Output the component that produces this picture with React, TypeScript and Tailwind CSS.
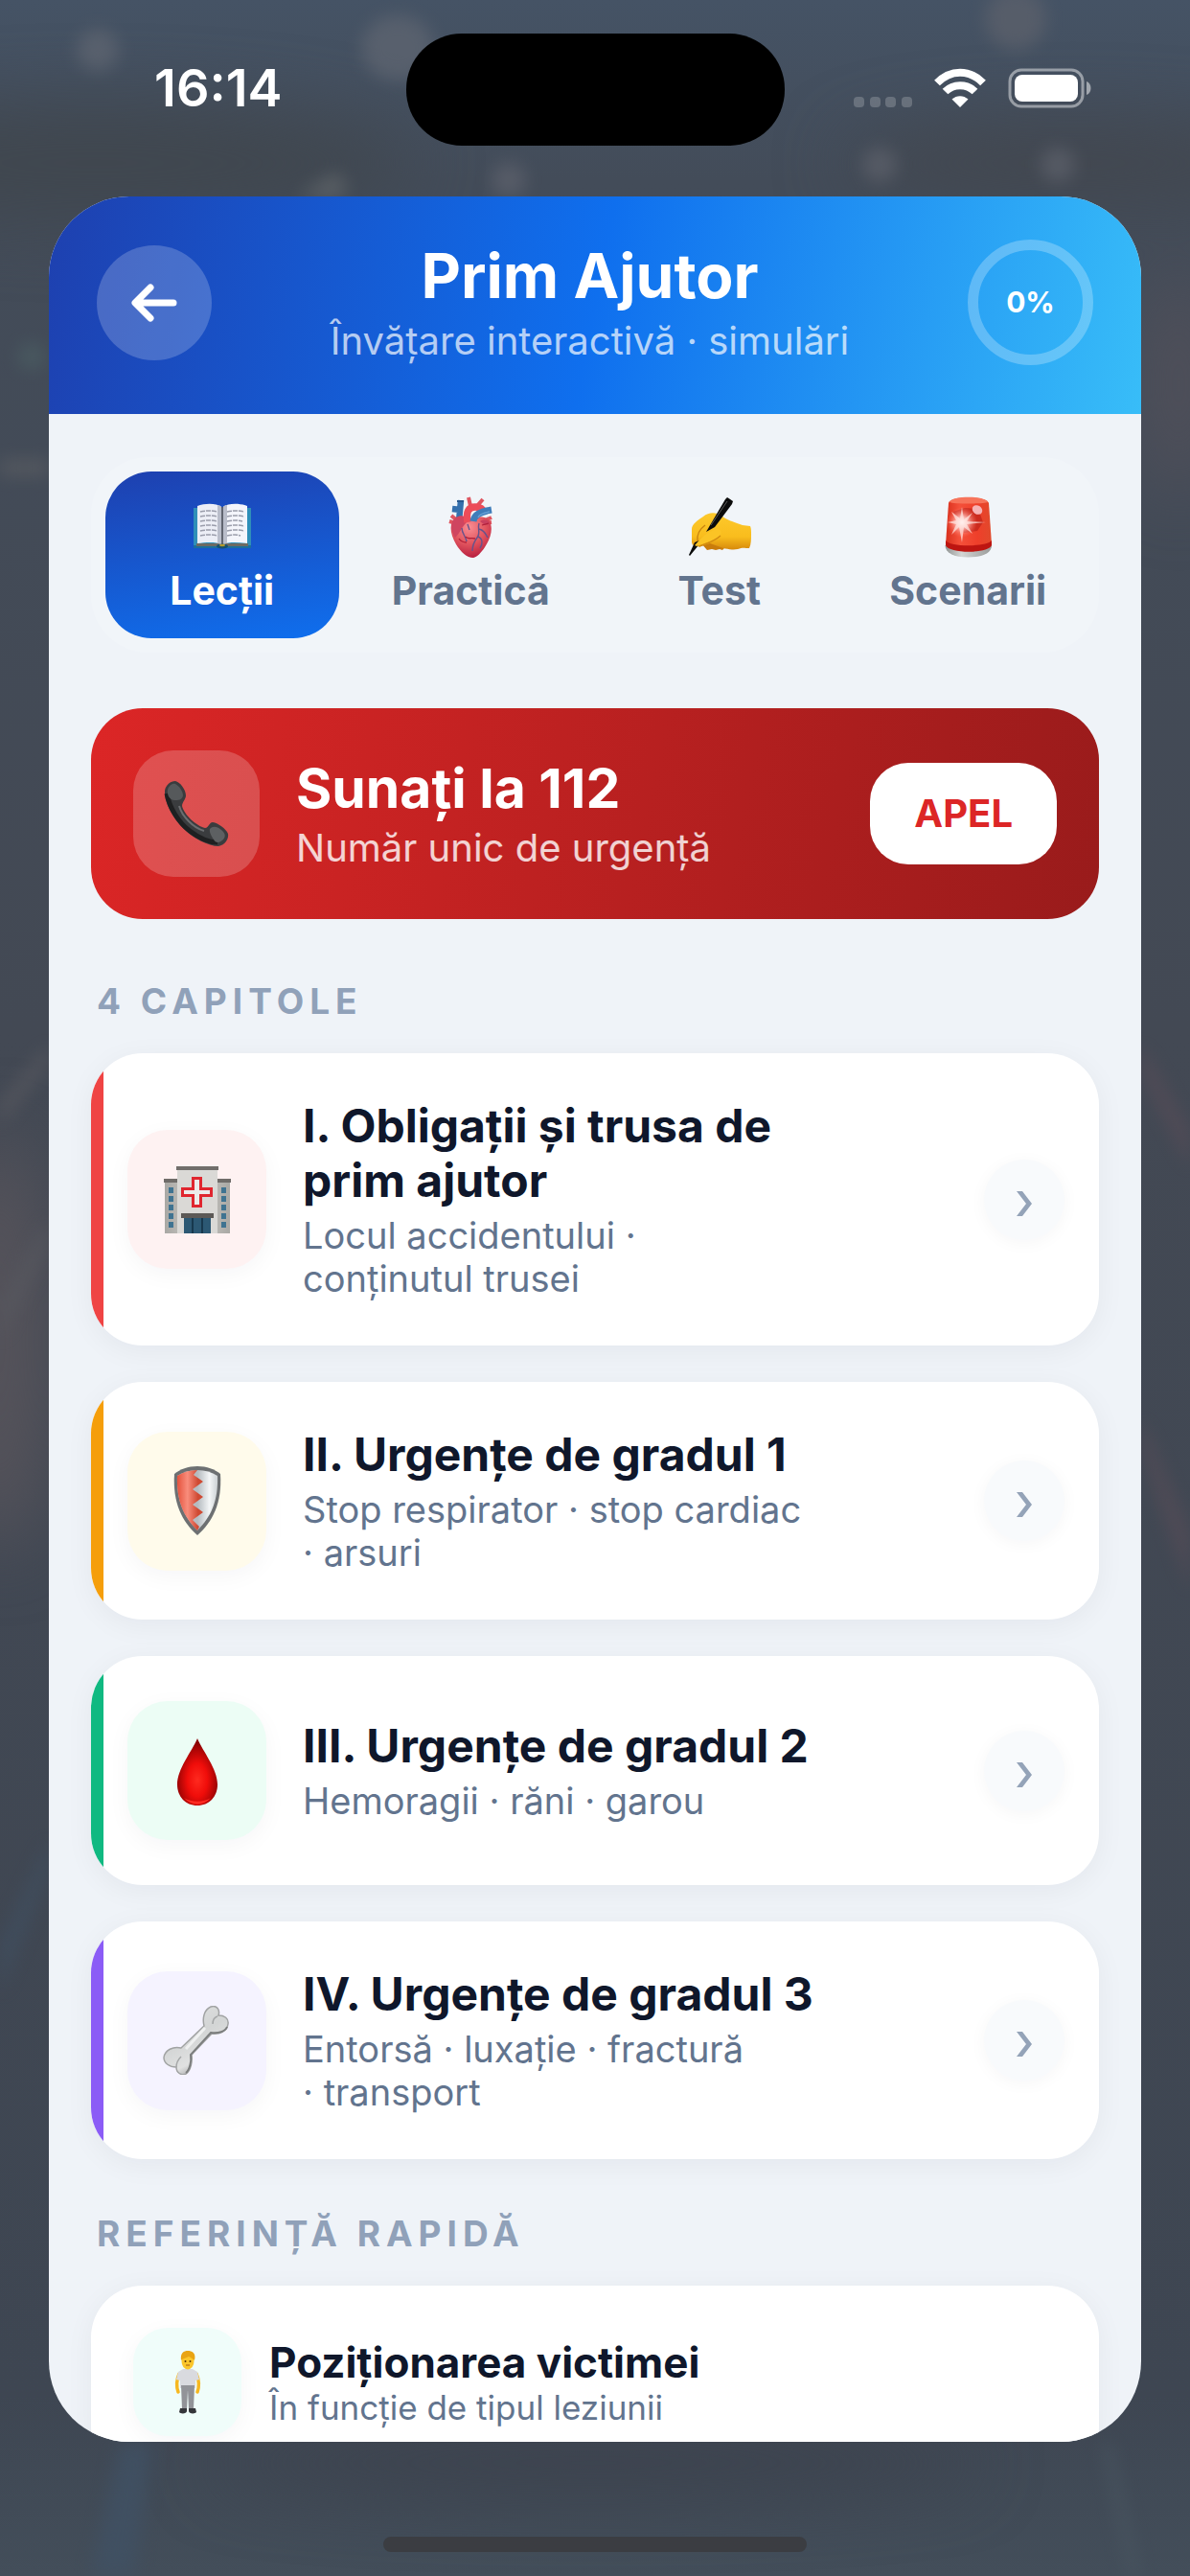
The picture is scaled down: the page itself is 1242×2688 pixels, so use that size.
import { useState, type ReactNode } from "react";
import clsx from "clsx";

type Chapter = {
  title: string;
  subtitle: string;
  stripe: string;
  tile: string;
  icon: ReactNode;
};

function BookIcon() {
  return (
    <svg viewBox="0 0 66 66" className="size-[66px]" aria-hidden="true">
      <path d="M3 13h60v42H3z" fill="#2f8fb8" />
      <path d="M3 52h60v3H3z" fill="#1c6f9c" />
      <path d="M6 50h26v3H6zM34 50h26v3H34z" fill="#6d6a62" />
      <path d="M7 11c8-3 20-3 25 1v39c-6-3-17-2-25-1z" fill="#eceef6" />
      <path d="M59 11c-8-3-20-3-25 1v39c6-3 17-2 25-1z" fill="#f4f5fb" />
      <path d="M28 10c2 0 4 1 5 3 1-2 3-3 5-3v40c-2 0-4 1-5 2-1-1-3-2-5-2z" fill="#b9bdca" />
      <path d="M33 12v40" stroke="#4b4f5a" strokeWidth="1.6" />
      <path
        d="M10 17q9-2 18 0M10 22q9-2 18 0M10 27q9-2 18 0M10 32q9-2 18 0M10 37q9-2 18 0M10 42q9-2 18 0M38 17q9-2 18 0M38 22q9-2 18 0M38 27q9-2 16 0M38 32q9-2 18 0M38 37q9-2 18 0M38 42q9-2 14 0"
        stroke="#9a9dab"
        strokeWidth="1.5"
        strokeDasharray="5 1"
        fill="none"
      />
      <ellipse cx="33" cy="53" rx="6" ry="2.6" fill="#15506f" />
      <ellipse cx="33" cy="52" rx="3" ry="1.2" fill="#b39a2c" />
    </svg>
  );
}

function HeartIcon() {
  return (
    <svg viewBox="0 0 66 66" className="size-[66px]" aria-hidden="true">
      <defs>
        <radialGradient id="heart" cx="0.45" cy="0.25" r="0.8">
          <stop offset="0" stopColor="#f98d93" />
          <stop offset="0.5" stopColor="#e2565f" />
          <stop offset="1" stopColor="#b3183c" />
        </radialGradient>
      </defs>
      <path d="M11 27l7 2M13 21l6 5M55 23l-7 3M55 28l-8 1M31 2l2 9M46 4l-7 8" stroke="#df5560" strokeWidth="4" />
      <path d="M23 5l-2 22M14 14l9 1" stroke="#3570ad" strokeWidth="6.5" />
      <path d="M19 6h7" stroke="#28588f" strokeWidth="2" />
      <path
        d="M14 27c4-5 11-5 18-2 8-4 17-4 21 2 4 8 1 18-5 27-4 6-8 10-12 11-7 0-13-6-18-14-5-9-7-17-4-24z"
        fill="url(#heart)"
      />
      <path d="M14 28c2-5 8-8 13-6l3 5c-5 4-7 11-13 17-3-6-5-11-3-16z" fill="#cf4560" />
      <path d="M30 28c-2-11 1-16 8-16 5 0 8 2 9 6" stroke="#ec4c59" strokeWidth="7.5" fill="none" />
      <path d="M36 27c1-7 7-10 19-12" stroke="#3f7dba" strokeWidth="7" fill="none" />
      <path d="M41 23c1-3 5-5 12-6" stroke="#66a0d4" strokeWidth="1.5" fill="none" />
      <path d="M43 27c5-3 9-1 10 3l-5 1z" fill="#c93f5e" />
      <path
        d="M42 29c-2 6 2 10-2 15-3 4-5 8-5 14M41 43c5 2 5 8 2 12M24 34c0 6 4 8 5 14M42 35c5 1 7 5 9 9M30 30l2 6"
        stroke="#66538c"
        strokeWidth="1.4"
        fill="none"
      />
      <path d="M38 45c-4-1-8 1-10-2M45 31l7-2M21 45c2 3 5 4 8 4" stroke="#b01f38" strokeWidth="1.3" fill="none" />
    </svg>
  );
}

function WritingIcon() {
  return (
    <svg viewBox="0 0 66 66" className="size-[66px] overflow-visible" aria-hidden="true">
      <defs>
        <linearGradient id="hand" x1="0" y1="0" x2="0" y2="1">
          <stop offset="0" stopColor="#fdc92c" />
          <stop offset="0.65" stopColor="#f9bd1d" />
          <stop offset="1" stopColor="#d78a0c" />
        </linearGradient>
      </defs>
      <path d="M14 50l6 7 5-1 4 1 4-1 3 1 4-4-6-8z" fill="#c97c0c" />
      <path
        d="M4 49V35c0-5 6-9 12-13 6-5 14-5 20 0 6 4 14 7 21 9l8 1c1 2 1 5 1 9s0 10-2 14c-5 0-7-1-12 1-5 1-11 0-15-1l-14-5-9 3c-3 2-6-1-4-4l-5 3z"
        fill="url(#hand)"
      />
      <path d="M10 48c-1-7 1-12 8-17" stroke="#c98410" strokeWidth="1.4" fill="none" />
      <path d="M41 2l6 4-1 3-18 24-9 5L39 4z" fill="#0b0b0b" />
      <path d="M41 6L24 31" stroke="#5b5b5b" strokeWidth="1" />
      <path d="M7 49l5-2-1 5-9 11-1-1z" fill="#0b0b0b" />
      <path d="M8 51c6-7 12-13 22-16 4 0 6 3 4 6-6 6-14 8-22 11-3 2-6 0-4-1z" fill="#fbc425" />
      <path d="M12 53c7-3 14-4 22-11" stroke="#d08b12" strokeWidth="1.3" fill="none" />
    </svg>
  );
}

function SirenIcon() {
  return (
    <svg viewBox="0 0 66 66" className="size-[66px]" aria-hidden="true">
      <defs>
        <linearGradient id="dome" x1="0" y1="0" x2="1" y2="0">
          <stop offset="0" stopColor="#d8301d" />
          <stop offset="0.3" stopColor="#f4503a" />
          <stop offset="0.7" stopColor="#ee3f2a" />
          <stop offset="1" stopColor="#e04a2c" />
        </linearGradient>
        <radialGradient id="glow">
          <stop offset="0" stopColor="#fff" />
          <stop offset="0.35" stopColor="#ffc9c4" stopOpacity="0.9" />
          <stop offset="1" stopColor="#ff6a5a" stopOpacity="0" />
        </radialGradient>
        <linearGradient id="base" x1="0" y1="0" x2="1" y2="0">
          <stop offset="0" stopColor="#8f9291" />
          <stop offset="0.35" stopColor="#d3d5d4" />
          <stop offset="1" stopColor="#989a99" />
        </linearGradient>
      </defs>
      <path d="M9.5 52c0 8 9 12.5 24 12.5S58 60 58 52z" fill="url(#base)" />
      <path d="M13 8c1-8 40-8 42 0l3 43c-2 9-46 9-48 0z" fill="url(#dome)" />
      <path d="M10 47c4 7 43 7 48 0v5c-3 9-45 9-48 0z" fill="#bd1511" />
      <path d="M14 7c2-7 38-7 40 0-4 2-36 2-40 0z" fill="#f7745b" />
      <path d="M18 17l12-4 14 1 5 14-6 9-14 2z" fill="#a91512" opacity="0.5" />
      <ellipse cx="43" cy="15" rx="5.5" ry="4.5" transform="rotate(35 43 15)" fill="#f6b3b5" />
      <circle cx="27" cy="28" r="16" fill="url(#glow)" />
      <path
        d="M27 12l2 13 9-7-6 9 20 1-20 2 6 10-9-7-2 16-3-16-8 8 5-11-9-2 9-2-5-9 9 7z"
        fill="#ffe9e6"
        opacity="0.7"
      />
    </svg>
  );
}

function PhoneIcon() {
  return (
    <svg viewBox="0 0 68 68" className="size-[68px]" aria-hidden="true">
      <path
        d="M1 10C2 4 7 0 12 0c5 1 11 9 11 15 0 4-4 7-4 11 2 9 15 21 24 23 4 0 4-6 8-6 6 1 14 7 16 12 1 5-3 12-10 13-10 0-27-8-38-20C8 36 0 21 1 10z"
        fill="#3a3c3e"
      />
      <path d="M3 13c3 15 12 30 24 39 9 7 19 12 29 12" stroke="#1f2021" strokeWidth="5" fill="none" />
      <path d="M4 9C5 5 9 2 12 3c4 2 8 8 8 12-1 5-5 5-9 5C6 20 3 14 4 9z" fill="#56595b" />
      <path d="M48 50c3-3 7-3 12 1 4 3 5 7 2 10-4 4-8 4-10 0-2-3-5-8-4-11z" fill="#5d6062" />
      <path d="M16 26c3 11 15 23 26 26" stroke="#6b6e70" strokeWidth="2" fill="none" />
    </svg>
  );
}

function HospitalIcon() {
  return (
    <svg viewBox="0 0 72 72" className="size-[72px]" aria-hidden="true">
      <defs>
        <linearGradient id="wing" x1="0" y1="0" x2="1" y2="0">
          <stop offset="0" stopColor="#a9a8a4" />
          <stop offset="0.5" stopColor="#cfcdc9" />
          <stop offset="1" stopColor="#a9a8a4" />
        </linearGradient>
      </defs>
      <path d="M2 16h68v55H2z" fill="url(#wing)" />
      <path d="M1 14h15v4H1zM56 14h15v4H56z" fill="#6f6c69" />
      <path d="M15 3h42v68H15z" fill="#dad9d6" />
      <path d="M14 1h44v4H14z" fill="#716e6b" />
      <path
        d="M6 23h5v6H6zM6 32h5v6H6zM6 41h5v6H6zM6 50h5v6H6zM6 59h5v6H6zM61 23h5v6h-5zM61 32h5v6h-5zM61 41h5v6h-5zM61 50h5v6h-5zM61 59h5v6h-5z"
        fill="#3f7391"
      />
      <path
        d="M31.5 13.500h8v11h11v7h-11v11h-8v-11h-11v-7h11z"
        fill="#ecebea"
        stroke="#e0262f"
        strokeWidth="3"
      />
      <path d="M19 50h34v5H19z" fill="#5c5956" />
      <path d="M22 55h28v16H22z" fill="#2c5873" />
      <path d="M31 55v16M41 55v16" stroke="#17384d" strokeWidth="2" />
    </svg>
  );
}

function ShieldIcon() {
  return (
    <svg viewBox="0 0 72 72" className="size-[72px]" aria-hidden="true">
      <defs>
        <linearGradient id="steel" x1="0" y1="0" x2="1" y2="0">
          <stop offset="0" stopColor="#c9cdd0" />
          <stop offset="0.5" stopColor="#b4babf" />
          <stop offset="0.8" stopColor="#f4f6f7" />
          <stop offset="1" stopColor="#ccd1d4" />
        </linearGradient>
        <linearGradient id="enamel" x1="0" y1="0" x2="1" y2="0">
          <stop offset="0" stopColor="#e4523c" />
          <stop offset="0.4" stopColor="#f98d7c" />
          <stop offset="0.8" stopColor="#cf4a33" />
        </linearGradient>
      </defs>
      <path d="M36 0c10 0 18 3 24 8 2 30-8 50-24 64C20 58 10 38 12 8 18 3 26 0 36 0z" fill="#6d7072" />
      <path d="M36 4c8 0 15 2 21 6 1 26-7 43-21 57-14-14-22-31-21-57 6-4 13-6 21-6z" fill="url(#steel)" />
      <path
        d="M36 4l-4 5 10 7-11 8 11 8-11 8 11 8-11 8 7 7-2 4c-14-14-22-31-21-57 6-4 13-6 21-6z"
        fill="url(#enamel)"
      />
    </svg>
  );
}

function DropIcon() {
  return (
    <svg viewBox="0 0 72 72" className="size-[72px]" aria-hidden="true">
      <defs>
        <radialGradient id="drop" cx="0.5" cy="0.62" r="0.55">
          <stop offset="0" stopColor="#ff2a1f" />
          <stop offset="0.45" stopColor="#f00d0a" />
          <stop offset="0.85" stopColor="#a80505" />
          <stop offset="1" stopColor="#8a0303" />
        </radialGradient>
      </defs>
      <path d="M36 2c6 14 21 32 21 48 0 13-9 22-21 22s-21-9-21-22C15 34 30 16 36 2z" fill="url(#drop)" />
      <path d="M22 64c8 9 20 9 28 0-8 5-20 5-28 0z" fill="#ff2b22" />
    </svg>
  );
}

function BoneIcon() {
  return (
    <svg viewBox="0 0 72 72" className="size-[72px]" aria-hidden="true">
      <defs>
        <linearGradient id="bone" x1="0.2" y1="0" x2="0.7" y2="1">
          <stop offset="0" stopColor="#dfe0e0" />
          <stop offset="0.45" stopColor="#d3d5d5" />
          <stop offset="0.75" stopColor="#e0e1e1" />
          <stop offset="1" stopColor="#858787" />
        </linearGradient>
      </defs>
      <path
        d="M43 21c-2-8 0-17 7-20 6-2 10 3 8 9 6 0 11 3 10 9-1 8-9 11-17 10L30 51c1 7-1 17-6 20-5 2-10-1-10-7-7 0-13-4-13-10 1-8 10-12 18-10z"
        fill="url(#bone)"
        stroke="#a1a3a3"
        strokeWidth="1.5"
      />
      <path d="M57 11c-3 1-5 4-5 8M14 64c0-4 2-8 5-11" stroke="#a5a7a8" strokeWidth="1.5" fill="none" />
      <path d="M67 22c-2 5-9 7-17 6L29 51c1 7-1 16-5 19" stroke="#7c7e7e" strokeWidth="2" fill="none" />
      <path d="M44 23L24 45" stroke="#eff0f0" strokeWidth="3" />
    </svg>
  );
}

function PersonIcon() {
  return (
    <svg viewBox="0 0 66 66" className="size-[66px]" aria-hidden="true">
      <path d="M24 24c-3 6-3 14-1 19M42 24c3 6 3 14 1 19" stroke="#f7b820" strokeWidth="3.5" strokeLinecap="round" fill="none" />
      <path d="M28 19h10l5 3 2 8-4 1v8H25v-8l-4-1 2-8z" fill="#d9dadf" />
      <path d="M26 36h14l-1 25h-5l-1-20-1 20h-5z" fill="#929398" />
      <path d="M25 60h7v3c0 3-7 3-8 1zM34 60h7l1 4c-1 2-8 2-8-1z" fill="#35363a" />
      <ellipse cx="33" cy="11" rx="6.5" ry="8.5" fill="#fbc62b" />
      <path d="M26 10C25 2 29 0 33 0s9 2 7 10c-2-2-4-3-6-4-3 2-5 1-8 4z" fill="#e9a413" />
      <circle cx="30.5" cy="11" r="1" fill="#54330a" />
      <circle cx="35.5" cy="11" r="1" fill="#54330a" />
      <path d="M31 15h4" stroke="#a55a12" strokeWidth="1" />
    </svg>
  );
}

// Blurred night-road photo behind the sheet
function Backdrop() {
  return (
    <svg
      viewBox="0 0 1242 2688"
      preserveAspectRatio="none"
      className="absolute inset-0 size-full"
      aria-hidden="true"
    >
      <defs>
        <linearGradient id="night" x1="0" y1="0" x2="0" y2="1">
          <stop offset="0" stopColor="#455365" />
          <stop offset="0.07" stopColor="#434c59" />
          <stop offset="0.4" stopColor="#434954" />
          <stop offset="0.93" stopColor="#3e4652" />
          <stop offset="1" stopColor="#434e5a" />
        </linearGradient>
        <filter id="soft" x="-50%" y="-50%" width="200%" height="200%" colorInterpolationFilters="sRGB">
          <feGaussianBlur stdDeviation="9" />
        </filter>
        <filter id="softer" x="-50%" y="-50%" width="200%" height="200%" colorInterpolationFilters="sRGB">
          <feGaussianBlur stdDeviation="36" />
        </filter>
      </defs>
      <rect width="1242" height="2688" fill="url(#night)" />
      <g filter="url(#softer)">
        <ellipse cx="100" cy="170" rx="330" ry="60" fill="#40474f" />
        <ellipse cx="1120" cy="170" rx="240" ry="40" fill="#42474f" />
        <ellipse cx="0" cy="1400" rx="50" ry="220" fill="#57545b" />
        <ellipse cx="620" cy="2570" rx="400" ry="30" fill="#3c424d" />
        <ellipse cx="1230" cy="400" rx="30" ry="120" fill="#54515a" />
      </g>
      <g filter="url(#soft)" opacity="0.8">
        <circle cx="102" cy="52" r="22" fill="#5d6470" />
        <ellipse cx="415" cy="50" rx="38" ry="34" fill="#5d6470" />
        <circle cx="1060" cy="20" r="32" fill="#5b606b" />
        <circle cx="918" cy="172" r="18" fill="#5b5f69" />
        <circle cx="1104" cy="172" r="18" fill="#5b5f69" />
        <circle cx="531" cy="188" r="18" fill="#5c606b" />
        <path d="M310 205l42-26 12 20-14 10z" fill="#5f6468" />
        <circle cx="33" cy="372" r="14" fill="#4b5d62" />
        <path d="M0 480h51v16H0z" fill="#5a5d62" />
        <path d="M0 1150l51-60v20L0 1175zM0 1360l51-90v30L0 1400z" fill="#57585f" />
        <path d="M0 2030l51-110v30L0 2080z" fill="#404f60" />
        <path d="M1191 1090l51 90v40l-51-100zM1191 1480l51 120v60l-51-150z" fill="#554c57" />
        <path d="M125 2550h35l-20 138H95z" fill="#405164" />
        <path d="M1150 2550h10l30 138h-12z" fill="#4a5661" />
      </g>
    </svg>
  );
}

function StatusBar() {
  return (
    <div className="relative grid h-[205px] shrink-0 grid-cols-[1fr_395px_1fr] pt-[35px]">
      <div className="flex h-[117px] items-center justify-center pb-1 pl-8 text-[54px] font-semibold text-white">
        16:14
      </div>
      <div className="h-[117px] rounded-[58px] bg-black" />
      <div className="flex h-[117px] items-center justify-end pr-[102px] pb-1">
        <svg viewBox="0 0 250 44" className="h-11 w-[250px]" aria-hidden="true">
          <g fill="#fff" fillOpacity="0.2">
            <rect x="1" y="31" width="11" height="11" rx="4" />
            <rect x="18" y="31" width="11" height="11" rx="4" />
            <rect x="34" y="31" width="11" height="11" rx="4" />
            <rect x="51" y="31" width="11" height="11" rx="4" />
          </g>
          <g fill="none" stroke="#fff" strokeWidth="8">
            <path d="M88 16.5C102 2 122 2 136 16.5" />
            <path d="M96.5 25.5C105 17 119 17 127.5 25.5" />
          </g>
          <path d="M112 42l-8.5-8.5c5-4.500 12-4.500 17 0z" fill="#fff" />
          <rect x="164" y="3" width="76" height="38" rx="12" fill="none" stroke="#fff" strokeOpacity="0.45" strokeWidth="3" />
          <rect x="169" y="8" width="66" height="28" rx="8" fill="#fff" />
          <path d="M244 15c6 2 6 12 0 14z" fill="#fff" fillOpacity="0.5" />
        </svg>
      </div>
    </div>
  );
}

const tabs = [
  { name: "Lecții", icon: <BookIcon /> },
  { name: "Practică", icon: <HeartIcon /> },
  { name: "Test", icon: <WritingIcon /> },
  { name: "Scenarii", icon: <SirenIcon /> },
];

const chapters: Chapter[] = [
  {
    title: "I. Obligații și trusa de\nprim ajutor",
    subtitle: "Locul accidentului ·\nconținutul trusei",
    stripe: "bg-[#ef4444]",
    tile: "bg-[#fef2f2]",
    icon: <HospitalIcon />,
  },
  {
    title: "II. Urgențe de gradul 1",
    subtitle: "Stop respirator · stop cardiac\n· arsuri",
    stripe: "bg-[#f59e0b]",
    tile: "bg-[#fffbeb]",
    icon: <ShieldIcon />,
  },
  {
    title: "III. Urgențe de gradul 2",
    subtitle: "Hemoragii · răni · garou",
    stripe: "bg-[#10b981]",
    tile: "bg-[#ecfdf5]",
    icon: <DropIcon />,
  },
  {
    title: "IV. Urgențe de gradul 3",
    subtitle: "Entorsă · luxație · fractură\n· transport",
    stripe: "bg-[#8b5cf6]",
    tile: "bg-[#f5f3ff]",
    icon: <BoneIcon />,
  },
];

function ChapterCard({ chapter }: { chapter: Chapter }) {
  return (
    <button
      type="button"
      className="flex w-full overflow-hidden rounded-[54px] bg-white text-left shadow-[0_6px_30px_rgba(15,23,42,0.05)]"
    >
      <span className={clsx("w-[13px] shrink-0 self-stretch", chapter.stripe)} />
      <span className="flex flex-1 items-center py-[47px] pr-9 pl-[25px]">
        <span
          className={clsx(
            "flex size-[145px] shrink-0 items-center justify-center rounded-[42px] shadow-[0_6px_24px_rgba(15,23,42,0.04)]",
            chapter.tile,
          )}
        >
          {chapter.icon}
        </span>
        <span className="ml-[38px] flex-1 whitespace-pre-line">
          <span className="block text-[48px] leading-[57px] font-bold text-slate-900">
            {chapter.title}
          </span>
          <span className="mt-[7px] block text-[38px] leading-[45px] text-slate-500">
            {chapter.subtitle}
          </span>
        </span>
        <span className="flex size-[84px] shrink-0 items-center justify-center rounded-full bg-slate-50 shadow-[0_3px_18px_rgba(15,23,42,0.04)]">
          <svg viewBox="0 0 16 26" className="mt-2 h-[26px] w-4" aria-hidden="true">
            <path d="M0 0h6l10 13L6 26H0l10-13z" fill="#94a3b8" />
          </svg>
        </span>
      </span>
    </button>
  );
}

export default function App() {
  const [activeTab, setActiveTab] = useState("Lecții");

  return (
    <div className="relative flex h-screen flex-col overflow-hidden bg-[#434c59] font-['Inter',sans-serif]">
      <Backdrop />
      <StatusBar />
      <main className="relative mx-[51px] flex-1 overflow-hidden rounded-[84px] bg-[#eff3f8]">
        <header className="flex items-center bg-[linear-gradient(101deg,#1e40af,#0f6fee_50%,#38bdf8)] px-[50px] pt-[45px] pb-[51px]">
          <button
            type="button"
            aria-label="Înapoi"
            className="flex size-[120px] shrink-0 items-center justify-center rounded-full bg-white/20"
          >
            <svg viewBox="0 0 48 40" className="h-10 w-12" aria-hidden="true">
              <path
                d="M20 4L4 20l16 16M5 20h39"
                fill="none"
                stroke="#fff"
                strokeWidth="7"
                strokeLinecap="round"
                strokeLinejoin="round"
              />
            </svg>
          </button>
          <div className="flex-1 text-center">
            <h1 className="text-[64px] leading-[72px] font-bold text-white">Prim Ajutor</h1>
            <p className="mt-2 text-[40px] leading-12 text-white/70">
              Învățare interactivă · simulări
            </p>
          </div>
          <div className="flex size-[131px] shrink-0 items-center justify-center rounded-full border-[11px] border-white/25 text-[30px] font-bold text-white">
            0%
          </div>
        </header>

        <div className="px-11 pt-[45px]">
          <nav className="grid grid-cols-4 gap-4 rounded-[60px] bg-slate-100 p-[15px]">
            {tabs.map((tab) => (
              <button
                key={tab.name}
                type="button"
                onClick={() => setActiveTab(tab.name)}
                className={clsx(
                  "flex flex-col items-center rounded-[48px] pt-[25px] pb-[26px] text-[41px] leading-12 font-bold",
                  activeTab === tab.name
                    ? "bg-[linear-gradient(172deg,#1e40af,#0f6fee)] text-white"
                    : "text-slate-500",
                )}
              >
                {tab.icon}
                <span className="mt-[9px]">{tab.name}</span>
              </button>
            ))}
          </nav>

          <section className="mt-[58px] flex items-center rounded-[54px] bg-[linear-gradient(102deg,#dc2626,#991b1b)] p-11">
            <div className="flex size-[132px] shrink-0 items-center justify-center rounded-[42px] bg-white/20">
              <PhoneIcon />
            </div>
            <div className="ml-[38px] flex-1">
              <h2 className="text-[57px] leading-[68px] font-bold text-white">Sunați la 112</h2>
              <p className="mt-1 text-[40px] leading-12 text-white/80">Număr unic de urgență</p>
            </div>
            <a
              href="tel:112"
              className="rounded-[40px] bg-white px-[46px] py-[29px] text-[40px] leading-12 font-bold text-[#dc2626]"
            >
              APEL
            </a>
          </section>

          <h3 className="mt-[62px] mb-[30px] px-1.5 text-[37px] leading-12 font-bold tracking-[6px] text-slate-400">
            4 CAPITOLE
          </h3>
          <div className="flex flex-col gap-[38px]">
            {chapters.map((chapter) => (
              <ChapterCard key={chapter.title} chapter={chapter} />
            ))}
          </div>

          <h3 className="mt-[54px] mb-[30px] px-1.5 text-[37px] leading-12 font-bold tracking-[6px] text-slate-400">
            REFERINȚĂ RAPIDĂ
          </h3>
          <button
            type="button"
            className="flex w-full items-center rounded-[54px] bg-white p-11 text-left shadow-[0_6px_30px_rgba(15,23,42,0.05)]"
          >
            <span className="flex size-[113px] shrink-0 items-center justify-center rounded-[36px] bg-[#f0fdfa] shadow-[0_6px_24px_rgba(15,23,42,0.04)]">
              <PersonIcon />
            </span>
            <span className="ml-[29px] flex-1">
              <span className="block text-[44px] leading-[52px] font-bold text-slate-900">
                Poziționarea victimei
              </span>
              <span className="block text-[35px] leading-[42px] text-slate-500">
                În funcție de tipul leziunii
              </span>
            </span>
          </button>
        </div>
      </main>
      <div className="relative flex h-[140px] shrink-0 items-end justify-center pb-[25px]">
        <div className="h-4 w-[442px] rounded-full bg-[#3b3d42]" />
      </div>
    </div>
  );
}
